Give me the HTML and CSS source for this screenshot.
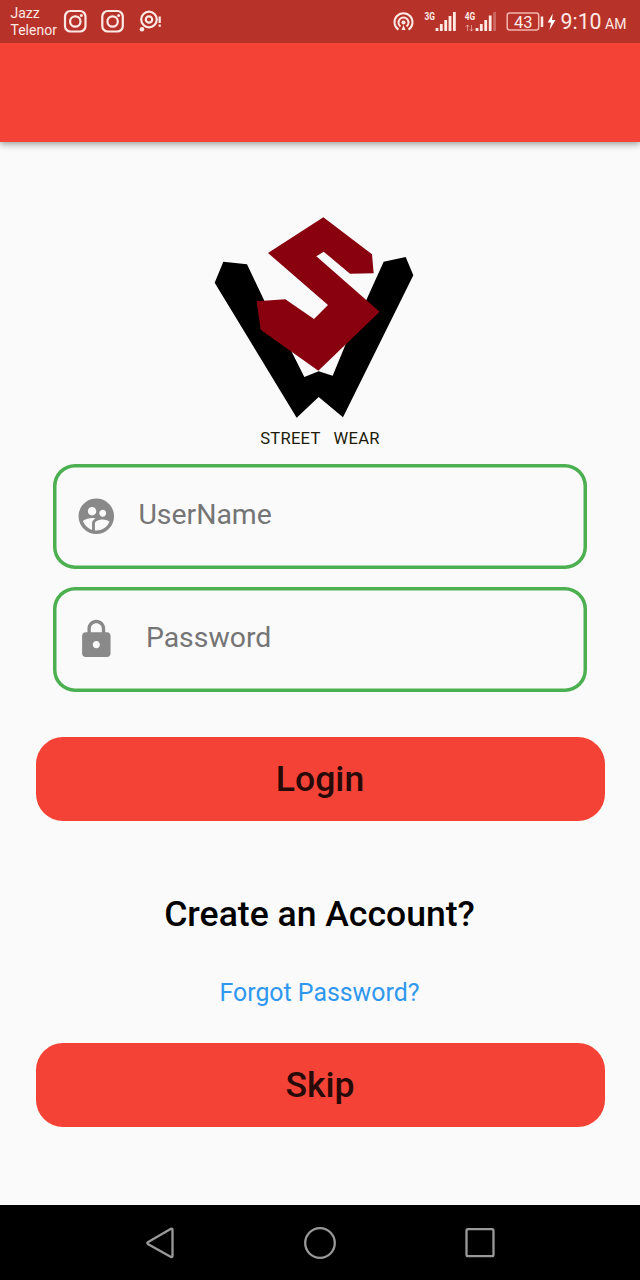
FILE: index.html
```html
<!DOCTYPE html>
<html lang="en">
<head>
<meta charset="utf-8">
<title>Street Wear</title>
<link rel="stylesheet" href="styles.css">
</head>
<body>
<div class="screen">
  <div class="status">
    <div class="carriers"><span>Jazz</span><span>Telenor</span></div>
    <svg class="status-icons" width="110" height="42" viewBox="0 0 110 42" fill="none" stroke="#ffe9e5" stroke-width="2.200">
      <g id="camera"><rect x="8" y="11" width="20.500" height="20.500" rx="5.500"/><circle cx="18.300" cy="21.500" r="5.200"/><circle cx="24.300" cy="15.600" r="1.500" fill="#ffe9e5" stroke="none"/></g>
      <use href="#camera" x="37.300"/>
      <circle cx="92" cy="19.500" r="7.800"/><circle cx="92" cy="19.500" r="3.200"/>
      <circle cx="85" cy="29.300" r="2.300" fill="#ffe9e5" stroke="none"/>
      <path d="M102.700 16.500v6.500M102.700 24.500v2.300"/>
    </svg>
    <svg class="system-icons" width="170" height="42" viewBox="0 0 170 42" fill="none" stroke="#ffe9e5" stroke-width="2">
      <path d="M8.500 29.700a9 9 0 1 1 10 0M10.500 26.500a5 5 0 1 1 6 0"/><circle cx="13.500" cy="22.500" r="2" fill="#ffe9e5" stroke="none"/><path d="M11.500 30l2-5 2 5z" fill="#ffe9e5" stroke="none"/>
      <g stroke-width="2.800"><path d="M47 31v-3M51.300 31v-7M55.700 31V20M60 31V16M64.400 31V12M87 31v-3M91.300 31v-7M95.700 31V20M100.200 31V15.500"/><path d="M104.600 31V12" opacity=".3"/></g>
      <path d="M77.500 31v-6M75.500 27l2-2 2 2M81.500 25v6M79.500 29l2 2 2-2" stroke-width="1" opacity=".5"/>
      <rect x="117.200" y="13" width="31.500" height="17" rx="2.500" stroke-width="1.500" stroke="#f4b5ad"/>
      <path d="M152 16.500v10.500" stroke-width="2.500"/>
      <path d="M162.700 13.500l-5 9h3.300l-1.500 7.500 6-10h-3.500z" fill="#fff" stroke="none"/>
      <g class="signal-text"><text x="34.500" y="19.500" textLength="10.500" lengthAdjust="spacingAndGlyphs">3G</text><text x="74.800" y="19.500" textLength="10.500" lengthAdjust="spacingAndGlyphs">4G</text></g>
      <text class="battery-text" x="133.300" y="27.500">43</text>
    </svg>
    <div class="clock">9:10<span class="meridiem">AM</span></div>
  </div>
  <header class="appbar"></header>
  <main class="content">
    <svg class="logo" viewBox="0 0 690 660">
      <path fill="#000" d="M70 170L141 178L193 287L240 360L275 440L313 516L356 499L398 512L436 420L500 283L551 170L617 156L640 211L429 637L356 576L290 638L44 233Z"/>
      <path fill="#89000f" d="M370 37L516 148L521 205L450 206L371 140L349 154L539 320L355 497L182 374L170 289L256 283L342 342L384 300L204 144Z"/>
    </svg>
    <div class="brand"><span>STREET</span><span>WEAR</span></div>
    <div class="field">
      <svg class="field-icon" viewBox="0 0 24 24"><path d="M11.990 2c-5.520 0-10 4.480-10 10s4.480 10 10 10 10-4.480 10-10-4.480-10-10-10zm3.610 6.340c1.070 0 1.930.86 1.930 1.930 0 1.070-.86 1.930-1.930 1.930-1.070 0-1.930-.86-1.930-1.930-.01-1.070.86-1.930 1.930-1.930zm-6-1.580c1.300 0 2.360 1.060 2.360 2.360 0 1.300-1.060 2.360-2.360 2.360s-2.360-1.060-2.360-2.360c0-1.310 1.050-2.360 2.360-2.360zm0 9.130v3.750c-2.400-.75-4.300-2.600-5.140-4.960 1.050-1.120 3.670-1.690 5.140-1.690.53 0 1.200.08 1.900.22-1.640.87-1.900 2.020-1.900 2.680zM11.990 20c-.27 0-.53-.01-.79-.04v-4.070c0-1.420 2.940-2.130 4.400-2.130 1.070 0 2.920.39 3.840 1.150-1.170 2.970-4.060 5.090-7.450 5.090z"/></svg>
      <span class="hint">UserName</span>
    </div>
    <div class="field field-password">
      <svg class="field-icon" viewBox="0 0 24 24"><path d="M18 8h-1V6c0-2.760-2.240-5-5-5S7 3.240 7 6v2H6c-1.100 0-2 .9-2 2v10c0 1.100.9 2 2 2h12c1.100 0 2-.9 2-2V10c0-1.100-.9-2-2-2zm-6 9c-1.100 0-2-.9-2-2s.9-2 2-2 2 .9 2 2-.9 2-2 2zm3.100-9H8.900V6c0-1.710 1.390-3.100 3.100-3.100s3.100 1.390 3.100 3.100v2z"/></svg>
      <span class="hint">Password</span>
    </div>
    <div class="button login"><span>Login</span></div>
    <div class="create">Create an Account?</div>
    <div class="forgot">Forgot Password?</div>
    <div class="button"><span>Skip</span></div>
  </main>
  <nav class="navbar">
    <svg viewBox="0 0 36 36"><path d="M30.500 4.500v26.500a1 1 0 0 1-1.500.9L5.800 18.900a1 1 0 0 1 0-1.700L29 3.700a1 1 0 0 1 1.500.8z"/></svg>
    <svg viewBox="0 0 36 36"><circle cx="18" cy="18" r="14.800"/></svg>
    <svg viewBox="0 0 36 36"><rect x="4.500" y="4.200" width="27" height="27" rx="1.500"/></svg>
  </nav>
</div>
</body>
</html>
```
FILE: styles.css
```css
body {
  margin: 0;
  font-family: Roboto, "Liberation Sans", sans-serif;
}
.screen {
  display: flex;
  flex-direction: column;
  width: 640px;
  height: 1280px;
  background: #fafafa;
  overflow: hidden;
}
.status {
  display: flex;
  position: relative;
  z-index: 1;
  height: 42.500px;
  flex: none;
  background: #b7332a;
  color: #ffe9e5;
}
.carriers {
  display: flex;
  flex-direction: column;
  width: 46px;
  padding: 5px 0 0 10.500px;
  font-size: 14px;
  line-height: 17px;
}
.status-icons { flex: none; }
.system-icons { flex: none; margin-left: 223.500px; }
.signal-text {
  font-size: 11px;
  font-weight: 700;
  fill: #ffe9e5;
  stroke: none;
}
.battery-text {
  font-size: 16.500px;
  text-anchor: middle;
  fill: #ffe9e5;
  stroke: none;
}
.clock {
  margin-left: .5px;
  font-size: 21.300px;
  line-height: 43px;
  white-space: nowrap;
}
.meridiem {
  margin-left: 3.500px;
  font-size: 14px;
}
.appbar {
  height: 99.500px;
  flex: none;
  background: #f44336;
  box-shadow: 0 2px 7px rgba(0, 0, 0, .4);
}
.content {
  display: flex;
  flex: 1;
  flex-direction: column;
  align-items: center;
  padding-top: 63px;
}
.logo {
  width: 230px;
  height: 220px;
  margin-right: 10px;
}
.brand {
  display: flex;
  gap: 13px;
  height: 39px;
  font-size: 16.600px;
  line-height: 27px;
  letter-spacing: .25px;
  color: #1c1a08;
}
.field {
  box-sizing: border-box;
  display: flex;
  align-items: center;
  width: 533.500px;
  height: 104.500px;
  padding-left: 21.500px;
  border-radius: 22px;
  box-shadow: inset 0 0 0 3.500px #4caf50;
}
.field-password { margin-top: 18.500px; }
.field-icon {
  width: 42.670px;
  height: 42.670px;
  fill: #898989;
}
.hint {
  margin-left: 21px;
  padding-bottom: 3.500px;
  font-size: 28.400px;
  line-height: 34px;
  color: #757575;
}
.field-password .hint { margin-left: 28.500px; }
.button {
  display: flex;
  align-items: center;
  justify-content: center;
  width: 569px;
  height: 84px;
  border-radius: 27px;
  background: #f44336;
  color: #270a08;
  font-size: 35.560px;
  font-weight: 500;
}
.login { margin-top: 45px; }
.create {
  margin: 72px 1px 0 0;
  font-size: 35.560px;
  font-weight: 500;
  line-height: 42px;
}
.forgot {
  margin: 43px 1px 36px 0;
  font-size: 24.890px;
  line-height: 29px;
  color: #2f98ee;
}
.navbar {
  display: flex;
  flex: none;
  align-items: center;
  justify-content: center;
  gap: 124px;
  height: 75px;
  background: #000;
}
.navbar svg {
  width: 36px;
  height: 36px;
  fill: none;
  stroke: #999;
  stroke-width: 2.300;
}
```
